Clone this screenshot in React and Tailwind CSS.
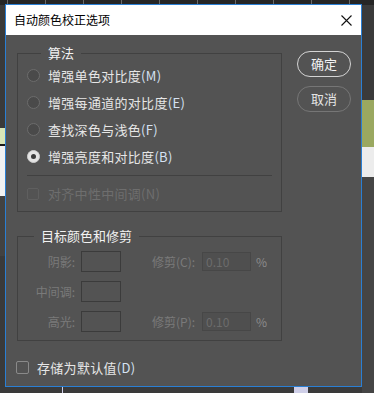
import React from 'react';

const font = { fontFamily: '"Noto Sans CJK SC", "Noto Sans", sans-serif' };

function Radio({ label, keyChar, checked }) {
    return (
        <div className="flex items-center h-[27px]">
            {checked ? (
                <div className="w-[13px] h-[13px] rounded-full bg-[#e4e4e4] border border-[#cfcfcf] flex items-center justify-center">
                    <div className="w-[5px] h-[5px] rounded-full bg-[#3a3a3a]"></div>
                </div>
            ) : (
                <div className="w-[13px] h-[13px] rounded-full bg-[#4a4a4a] border border-[#6c6c6c]"></div>
            )}
            <span className="ml-[8px] text-[13px] leading-none text-[#e6e6e6] tracking-[0.3px]">
                {label}<span className="text-[#d6e2f2]">({keyChar})</span>
            </span>
        </div>
    );
}

function Legend({ children, indent }) {
    return (
        <legend className={`${indent} px-[7px] text-[13px] leading-[16px] text-[#f2f2f2]`}>{children}</legend>
    );
}

function BoxInput() {
    return <div className="ml-[6px] w-[40px] h-[21px] border border-[#3b3b3b]"></div>;
}

function ClipInput() {
    return (
        <div className="ml-[7px] w-[49px] h-[19px] border border-[#474747] bg-[#4f4f4f] flex items-center pl-[3px] text-[12px] text-[#6c6c6c]">
            0.10
        </div>
    );
}

export default function App() {
    return (
        <div className="relative w-[374px] h-[393px] bg-[#3a3a3a] overflow-hidden" style={font}>
            {/* background: ruler and canvas bits */}
            <div className="absolute left-0 top-0 w-full h-[5px] bg-[#262626] flex gap-[37px] pl-[7px]">
                {[...Array(10)].map((_, i) => (
                    <div key={i} className="w-px h-[4px] bg-[#6a6a6a]"></div>
                ))}
            </div>
            <div className="absolute left-0 top-[128px] w-[5px] h-[16px] bg-[#d9e6b8]"></div>
            <div className="absolute left-0 top-[144px] w-[5px] h-[2px] bg-[#1a1a1a]"></div>
            <div className="absolute left-0 top-[146px] w-[5px] h-[50px] bg-[#f2f2f2]"></div>
            <div className="absolute left-0 top-[196px] w-[5px] h-[60px] bg-[#424242]"></div>
            <div className="absolute left-[362px] top-[100px] w-[12px] h-[48px] bg-[#9aa860]"></div>
            <div className="absolute left-[362px] top-[147px] w-[12px] h-[30px] bg-[#ececec]"></div>
            <div className="absolute left-[362px] top-[177px] w-[12px] h-[216px] bg-[#454545]"></div>
            <div className="absolute left-[62px] top-[387px] w-px h-[6px] bg-[#cfcfe8]"></div>
            <div className="absolute left-[294px] top-[387px] w-[14px] h-[6px] bg-[#cfcfe8]"></div>

            {/* dialog */}
            <div className="absolute z-10 left-[5px] top-[4px] w-[357px] h-[383px] border border-[#2a7fd4] bg-[#535353] flex flex-col">
                <div className="h-[30px] bg-white flex items-center justify-between pl-[8px] pr-[9px]">
                    <span className="text-[12px] text-black">自动颜色校正选项</span>
                    <svg width="11" height="11" viewBox="0 0 11 11">
                        <path d="M0.5 0.5 L10.5 10.5 M10.5 0.5 L0.5 10.5" stroke="#111" strokeWidth="1.1" fill="none" />
                    </svg>
                </div>

                <div className="flex pt-[10px]">
                    <div className="pl-[11px] w-[276px] flex flex-col">
                        <fieldset className="border border-[#414141] w-[265px] px-[9px] pt-[1px] pb-[4px]">
                            <Legend indent="ml-[14px]">算法</Legend>
                            <Radio label="增强单色对比度" keyChar="M" />
                            <Radio label="增强每通道的对比度" keyChar="E" />
                            <Radio label="查找深色与浅色" keyChar="F" />
                            <Radio label="增强亮度和对比度" keyChar="B" checked />
                            <div className="mt-[5px] h-px bg-[#414141]"></div>
                            <div className="mt-[4px] h-[27px] flex items-center">
                                <div className="w-[12px] h-[12px] rounded-[2px] border border-[#5f5f5f]"></div>
                                <span className="ml-[9px] text-[13px] leading-none text-[#6e6e6e] tracking-[0.3px]">对齐中性中间调(N)</span>
                            </div>
                        </fieldset>

                        <fieldset className="mt-[16px] border border-[#414141] w-[265px] pt-[7px] pb-[8px] flex flex-col gap-[9px]">
                            <Legend indent="ml-[16px]">目标颜色和修剪</Legend>
                            <div className="flex items-center h-[21px] text-[12px] text-[#7a7a7a]">
                                <span className="w-[57px] text-right">阴影:</span>
                                <BoxInput />
                                <span className="ml-[31px]">修剪(C):</span>
                                <ClipInput />
                                <span className="ml-[5px] text-[#8c8c8c]">%</span>
                            </div>
                            <div className="flex items-center h-[21px] text-[12px] text-[#7a7a7a]">
                                <span className="w-[57px] text-right">中间调:</span>
                                <BoxInput />
                            </div>
                            <div className="flex items-center h-[21px] text-[12px] text-[#7a7a7a]">
                                <span className="w-[57px] text-right">高光:</span>
                                <BoxInput />
                                <span className="ml-[31px]">修剪(P):</span>
                                <ClipInput />
                                <span className="ml-[5px] text-[#8c8c8c]">%</span>
                            </div>
                        </fieldset>
                    </div>

                    <div className="ml-[15px] pt-[6px] flex flex-col gap-[9px]">
                        <button className="w-[54px] h-[26px] rounded-full border-[1.5px] border-[#d4d4d4] text-[13px] text-[#f2f2f2] flex items-center justify-center">
                            确定
                        </button>
                        <button className="w-[54px] h-[26px] rounded-full border-[1.5px] border-[#767676] text-[13px] text-[#e4e4e4] flex items-center justify-center">
                            取消
                        </button>
                    </div>
                </div>

                <div className="mt-[16px] pl-[10px] h-[20px] flex items-center">
                    <div className="w-[13px] h-[13px] rounded-[2px] border border-[#8a8a8a]"></div>
                    <span className="ml-[8px] text-[13px] leading-none text-[#e6e6e6] tracking-[0.3px]">
                        存储为默认值<span className="text-[#d6e2f2]">(D)</span>
                    </span>
                </div>
            </div>
        </div>
    );
}
